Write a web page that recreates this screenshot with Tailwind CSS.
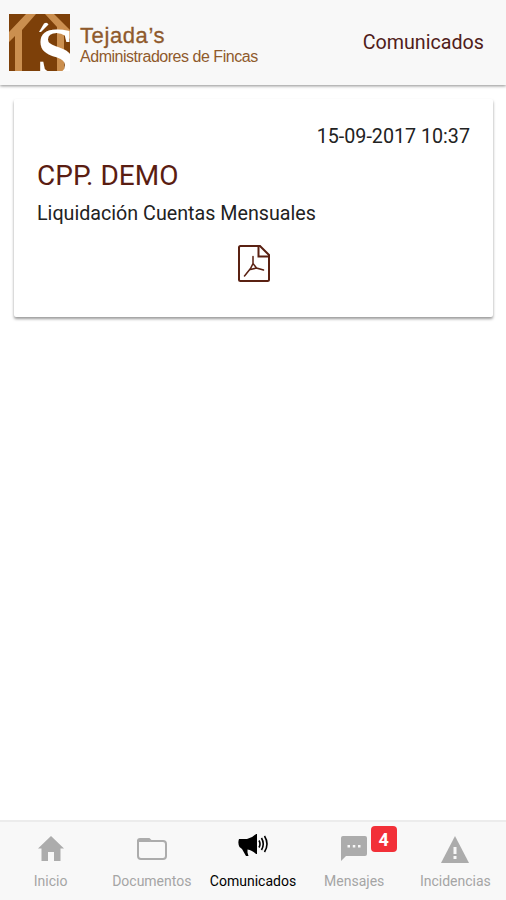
<!DOCTYPE html>
<html lang="es">
<head>
  <meta charset="UTF-8" />
  <meta name="viewport" content="width=device-width, initial-scale=1" />
  <title>Comunicados</title>
  <script src="https://cdn.jsdelivr.net/npm/@tailwindcss/browser@4"></script>
</head>
<body class="bg-white font-['Roboto',sans-serif]">
  <div class="flex flex-col h-screen">

    <header class="flex items-center h-[85px] shrink-0 pl-[9px] pr-[22px] bg-[#f8f8f8] shadow-[0_1px_3px_rgba(0,0,0,0.45)]">
      <svg class="w-[61px] h-[57px] shrink-0" viewBox="0 0 61 57">
        <rect width="61" height="57" fill="#7d4009" />
        <g fill="#cb8f4f">
          <path d="M17 0H27L13 16V57H6V22L0 28V18Z" />
          <path d="M36 0H45L61 16V25L55 20V57H48V13Z" />
        </g>
        <path d="M30 18L35 9.500Q38 7.500 39.500 10.500L32 18Z" fill="#fff" />
        <text x="27.500" y="62" font-family="Liberation Serif, serif" font-weight="bold" font-size="70" fill="#fff">S</text>
      </svg>
      <div class="ml-[10px] mt-[7px] font-['Liberation_Sans',sans-serif] text-[#8f5a2c] whitespace-nowrap">
        <div class="text-[22px] leading-[22px] tracking-[0.6px] [-webkit-text-stroke:0.3px_#8f5a2c]">Tejada’s</div>
        <div class="text-[16px] leading-[20px] tracking-[-0.47px]">Administradores de Fincas</div>
      </div>
      <h1 class="ml-auto text-[19.7px] text-[#50201a]">Comunicados</h1>
    </header>

    <main class="flex-1 pl-[14px] pr-[13px] pt-[14px]">
      <article class="h-[218px] px-[23px] pt-[26px] bg-white rounded-[2px] shadow-[0_2px_3px_rgba(0,0,0,0.4)]">
        <p class="text-right text-[19.7px] leading-6 text-[#222]">15-09-2017 10:37</p>
        <h2 class="mt-[11px] text-[28px] leading-8 text-[#5a1d12]">CPP. DEMO</h2>
        <p class="mt-[10px] text-[19.7px] leading-6 text-[#222]">Liquidación Cuentas Mensuales</p>
        <svg class="mx-auto mt-[19px] w-8 h-[37px]" viewBox="0 0 32 37" fill="none" stroke="#5a2112" stroke-width="2">
          <path d="M2.500 1H22L31 10V34.500Q31 36 29.500 36H2.500Q1 36 1 34.500V2.500Q1 1 2.500 1Z" />
          <path d="M20.500 1V11.500H31" />
          <path d="M15 11.500V18.500L12.500 23.500L6.500 31M15 18.500L18.500 23L25.500 25M12.500 24.500L18.500 23" stroke-width="1.500" stroke-linecap="round" />
        </svg>
      </article>
    </main>

    <nav class="grid grid-cols-5 h-20 shrink-0 bg-[#f8f8f8] border-t-2 border-[#ececec] text-[14px] text-[#a5a5a5]">
      <a class="flex flex-col items-center">
        <svg class="mt-[14px] w-[26px] h-[26px]" viewBox="0 0 26 26" fill="#acacac">
          <path d="M13 0L26 12.500H22.500V25H16V16H10V25H3.500V12.500H0Z" />
        </svg>
        <span class="mt-[9px] leading-5">Inicio</span>
      </a>
      <a class="flex flex-col items-center">
        <svg class="mt-[14px] w-[30px] h-[26px]" viewBox="0 0 30 26" fill="none" stroke="#acacac" stroke-width="2">
          <path d="M1 4V20Q1 23 4 23H26Q29 23 29 20V8Q29 5 26 5H14L12 3H3Q1 3 1 5Z" />
          <path d="M2 3.500H12L14 6H2Z" fill="#acacac" stroke="none" />
        </svg>
        <span class="mt-[9px] leading-5">Documentos</span>
      </a>
      <a class="flex flex-col items-center text-black">
        <svg class="mt-[11px] w-[30px] h-[26px]" viewBox="0 0 30 26">
          <path d="M1 6H9Q14 5 18 1H19V21H18Q14 17 9.500 16.500V19.500L10.500 23H8L4 16L1.500 14Q-0.500 10 1 6Z" />
          <path d="M21 7.500Q23 11 21 14.500M23.500 5Q27 11 23.500 17M26.500 3Q31.500 11 26.500 19" fill="none" stroke="#000" stroke-width="1.600" />
        </svg>
        <span class="mt-[12px] leading-5">Comunicados</span>
      </a>
      <a class="relative flex flex-col items-center">
        <svg class="mt-[14px] w-[26px] h-[26px]" viewBox="0 0 26 26">
          <path d="M2 0H24Q26 0 26 2V18Q26 20 24 20H5L0 25V2Q0 0 2 0Z" fill="#acacac" />
          <path d="M6.500 9H9V11.500H6.500ZM11.800 9H14.300V11.500H11.800ZM17 9H19.500V11.500H17Z" fill="#f8f8f8" />
        </svg>
        <span class="mt-[9px] leading-5">Mensajes</span>
        <span class="absolute left-[67px] top-[4px] flex items-center justify-center w-[26px] h-[26px] rounded-[4px] bg-[#f23038] text-white text-[18px] font-bold">4</span>
      </a>
      <a class="flex flex-col items-center">
        <svg class="mt-[14px] w-[28px] h-[27px]" viewBox="0 0 28 27">
          <path d="M14 0L28 27H0Z" fill="#acacac" />
          <path d="M12.500 11H15.500V18H12.500ZM12.500 20H15.500V23H12.500Z" fill="#f8f8f8" />
        </svg>
        <span class="mt-[8px] leading-5">Incidencias</span>
      </a>
    </nav>

  </div>
</body>
</html>
